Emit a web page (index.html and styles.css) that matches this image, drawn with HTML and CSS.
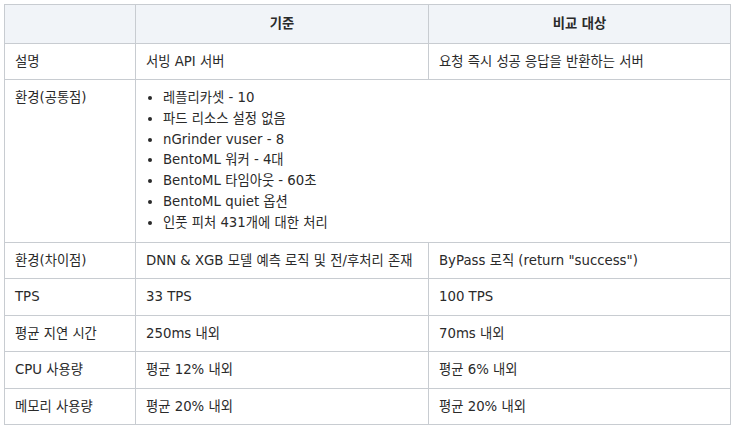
FILE: index.html
```html
<!DOCTYPE html>
<html lang="ko">
<head>
<meta charset="utf-8">
<link rel="stylesheet" href="styles.css">
</head>
<body>
<div class="page">
<table class="cmp">
  <colgroup>
    <col class="c1"><col class="c2"><col class="c3">
  </colgroup>
  <thead>
    <tr><th></th><th>기준</th><th>비교 대상</th></tr>
  </thead>
  <tbody>
    <tr><td>설명</td><td>서빙 API 서버</td><td>요청 즉시 성공 응답을 반환하는 서버</td></tr>
    <tr>
      <td class="top">환경(공통점)</td>
      <td colspan="2">
        <ul class="list">
          <li>레플리카셋 - 10</li>
          <li>파드 리소스 설정 없음</li>
          <li>nGrinder vuser - 8</li>
          <li>BentoML 워커 - 4대</li>
          <li>BentoML 타임아웃 - 60초</li>
          <li>BentoML quiet 옵션</li>
          <li>인풋 피처 431개에 대한 처리</li>
        </ul>
      </td>
    </tr>
    <tr><td>환경(차이점)</td><td>DNN &amp; XGB 모델 예측 로직 및 전/후처리 존재</td><td>ByPass 로직 (return "success")</td></tr>
    <tr><td>TPS</td><td>33 TPS</td><td>100 TPS</td></tr>
    <tr><td>평균 지연 시간</td><td>250ms 내외</td><td>70ms 내외</td></tr>
    <tr><td>CPU 사용량</td><td>평균 12% 내외</td><td>평균 6% 내외</td></tr>
    <tr><td>메모리 사용량</td><td>평균 20% 내외</td><td>평균 20% 내외</td></tr>
  </tbody>
</table>
</div>
</body>
</html>
```

FILE: styles.css
```css
html, body {
  margin: 0;
  padding: 0;
  background: #ffffff;
}
.page {
  padding: 4px;
}
.cmp {
  width: 726px;
  border-collapse: collapse;
  table-layout: fixed;
  font-family: "DejaVu Sans", "Noto Sans CJK KR", sans-serif;
  font-size: 13.3px;
  color: #2a2a2a;
}
.c1 { width: 131px; }
.c2 { width: 293px; }
.c3 { width: 302px; }
.cmp th, .cmp td {
  border: 1px solid #c8ccd1;
  padding: 8px 10px;
  line-height: 19.5px;
  text-align: left;
  vertical-align: middle;
}
.cmp th {
  background: #f1f4f8;
  font-weight: bold;
  text-align: center;
  padding: 9px 10px;
}
.cmp td.top {
  vertical-align: top;
}
.list {
  margin: 0;
  padding-left: 17px;
  list-style: disc;
}
.list li {
  line-height: 20.8px;
}
```
